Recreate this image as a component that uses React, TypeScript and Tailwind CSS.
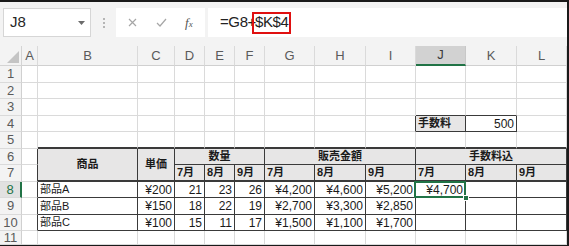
import React from "react"

type Cell = {
  t?: string
  align?: "left" | "right" | "center"
  bold?: boolean
  head?: boolean
  span?: string
  r2?: number // last row of a merged cell
  c2?: number // last column of a merged cell
}

const cols = ["A", "B", "C", "D", "E", "F", "G", "H", "I", "J", "K", "L"]

// r = sheet row, c = column index (0 = A)
const data: Record<string, Cell> = {
  "4-9": { t: "手数料", bold: true, head: true },
  "4-10": { t: "500", align: "right" },
  "6-1": { t: "商品", bold: true, head: true, align: "center", span: "row-span-2", r2: 7 },
  "6-2": { t: "単価", bold: true, head: true, align: "center", span: "row-span-2", r2: 7 },
  "6-3": { t: "数量", bold: true, head: true, align: "center", span: "col-span-3", c2: 5 },
  "6-6": { t: "販売金額", bold: true, head: true, align: "center", span: "col-span-3", c2: 8 },
  "6-9": { t: "手数料込", bold: true, head: true, align: "center", span: "col-span-3", c2: 11 },
  "7-3": { t: "7月", bold: true, head: true },
  "7-4": { t: "8月", bold: true, head: true },
  "7-5": { t: "9月", bold: true, head: true },
  "7-6": { t: "7月", bold: true, head: true },
  "7-7": { t: "8月", bold: true, head: true },
  "7-8": { t: "9月", bold: true, head: true },
  "7-9": { t: "7月", bold: true, head: true },
  "7-10": { t: "8月", bold: true, head: true },
  "7-11": { t: "9月", bold: true, head: true },
}

const body = [
  ["部品A", "¥200", "21", "23", "26", "¥4,200", "¥4,600", "¥5,200", "¥4,700"],
  ["部品B", "¥150", "18", "22", "19", "¥2,700", "¥3,300", "¥2,850"],
  ["部品C", "¥100", "15", "11", "17", "¥1,500", "¥1,100", "¥1,700"],
]
body.forEach((row, i) => {
  row.forEach((t, j) => {
    data[`${8 + i}-${1 + j}`] = { t, align: j === 0 ? "left" : "right" }
  })
})

// cells hidden under merged ones
const covered = new Set(["7-1", "7-2", "6-4", "6-5", "6-7", "6-8", "6-10", "6-11"])

const inTable = (r: number, c: number) =>
  (r >= 6 && r <= 10 && c >= 1 && c <= 11) || (r === 4 && (c === 9 || c === 10))

const rightBorder = (r: number, r2: number, c2: number) => {
  for (let x = r; x <= r2; x++) {
    if (inTable(x, c2) || inTable(x, c2 + 1)) return "border-r border-r-[#3a3a3a]"
  }
  return "border-r border-r-[#dadada]"
}

const bottomBorder = (r2: number, c: number) => {
  if ((r2 === 5 && inTable(6, c)) || (r2 === 7 && inTable(7, c))) return "border-b-2 border-b-[#3a3a3a]"
  if (inTable(r2, c) || inTable(r2 + 1, c)) return "border-b border-b-[#3a3a3a]"
  return "border-b border-b-[#dadada]"
}

const hasCjk = (t?: string) => !!t && /[\u3000-\u9fff]/.test(t)

const FormulaBar: React.FC = () => (
  <div className="h-[44px] shrink-0 flex items-start pt-[6px] pl-[3px]">
    {/* Name box */}
    <div className="w-[88px] h-[29px] bg-white border border-[#d6d6d6] flex items-center justify-between pl-[6px] pr-[5px]">
      <span className="text-[15px] text-[#262626]">J8</span>
      <svg width="7" height="4" viewBox="0 0 7 4">
        <path d="M0 0h7L3.5 4z" fill="#6b6b6b" />
      </svg>
    </div>
    <div className="w-[25px] h-[29px] flex flex-col items-center justify-center gap-[2px]">
      <span className="w-[2px] h-[2px] bg-[#b5b5b5]" />
      <span className="w-[2px] h-[2px] bg-[#b5b5b5]" />
      <span className="w-[2px] h-[2px] bg-[#b5b5b5]" />
    </div>
    {/* Cancel / enter / function */}
    <div className="w-[89px] h-[29px] bg-white flex items-center">
      <svg width="9" height="9" viewBox="0 0 9 9" className="ml-[12px]">
        <path d="M1 1l7 7M8 1l-7 7" stroke="#a6a6a6" strokeWidth="1.2" />
      </svg>
      <svg width="11" height="9" viewBox="0 0 11 9" className="ml-[19px]">
        <path d="M1 5l3 3 6-7" stroke="#a6a6a6" strokeWidth="1.2" fill="none" />
      </svg>
      <span className="ml-[18px] font-['Liberation_Serif',serif] italic text-[13px] text-[#555] leading-none">
        f<span className="text-[9px]">x</span>
      </span>
    </div>
    {/* Formula */}
    <div className="ml-[3px] flex-1 h-[29px] bg-white flex items-center pl-[12px] text-[15px] text-[#222] tracking-[-0.4px]">
      <span>=G8+</span>
      <span className="-ml-[4px] border-2 border-[#e01010] px-[1px] h-[22px] flex items-center">$K$4</span>
    </div>
  </div>
)

const Sheet: React.FC = () => {
  const cells: React.ReactNode[] = []

  cells.push(
    <div key="corner" className="bg-[#f3f3f3] border-r border-b border-[#d4d4d4] flex items-end justify-end p-[2px]">
      <svg width="12" height="12" viewBox="0 0 12 12">
        <path d="M12 0v12H0z" fill="#c4c4c4" />
      </svg>
    </div>
  )
  cols.forEach((c, i) =>
    cells.push(
      i === 9 ? (
        <div key={c} className="bg-[#d2d2d2] border-r border-r-[#c8c8c8] border-b-2 border-b-[#217346] flex items-center justify-center text-[13px] text-[#3a3a3a]">
          {c}
        </div>
      ) : (
        <div key={c} className="bg-[#f3f3f3] border-r border-r-[#dadada] border-b border-b-[#d0d0d0] flex items-center justify-center text-[13px] text-[#5a5a5a]">
          {c}
        </div>
      )
    )
  )

  for (let r = 1; r <= 11; r++) {
    cells.push(
      r === 8 ? (
        <div key={`h${r}`} className="bg-[#e1e1e1] border-r-2 border-r-[#217346] border-b border-b-[#dadada] flex items-center justify-center text-[13px] text-[#217346]">
          {r}
        </div>
      ) : (
        <div key={`h${r}`} className="bg-[#f3f3f3] border-r border-r-[#d0d0d0] border-b border-b-[#dadada] flex items-center justify-center text-[13px] text-[#5a5a5a]">
          {r}
        </div>
      )
    )
    for (let c = 0; c < 12; c++) {
      const key = `${r}-${c}`
      if (covered.has(key)) continue
      const d = data[key] || {}
      const r2 = d.r2 ?? r
      const c2 = d.c2 ?? c
      const isSel = r === 8 && c === 9
      cells.push(
        <div
          key={key}
          className={[
            "relative flex items-center px-[2px] leading-none whitespace-nowrap text-[#1a1a1a]",
            hasCjk(d.t) ? "text-[11px]" : "text-[12px]",
            d.head ? "bg-[#e7e6e6]" : "bg-white",
            d.bold ? "font-bold" : "",
            d.align === "right" ? "justify-end" : d.align === "center" ? "justify-center" : "justify-start",
            d.span || "",
            rightBorder(r, r2, c2),
            bottomBorder(r2, c),
          ].join(" ")}
        >
          {d.t}
          {isSel && (
            <>
              <div className="absolute -left-[2px] -top-[1px] -right-[1px] -bottom-[1px] border-2 border-[#217346] z-10" />
              <div className="absolute -right-[4px] -bottom-[4px] w-[6px] h-[6px] bg-[#217346] border border-white z-20" />
            </>
          )}
        </div>
      )
    }
  }

  return (
    <div className="grid grid-cols-[22px_16px_100px_37px_30px_30px_30px_50px_51px_50px_50px_51px_50px] grid-rows-[20px_17px_16px_17px_16px_17px_16px_17px_16px_17px_16px_14px] overflow-hidden">
      {cells}
    </div>
  )
}

export default function App() {
  return (
    <div className="w-[569px] h-[246px] overflow-hidden bg-[#f3f3f3] border-t-2 border-r-2 border-b border-[#1a1a1a] flex flex-col font-['Liberation_Sans','Noto_Sans_CJK_JP',sans-serif]">
      <FormulaBar />
      <Sheet />
    </div>
  )
}
